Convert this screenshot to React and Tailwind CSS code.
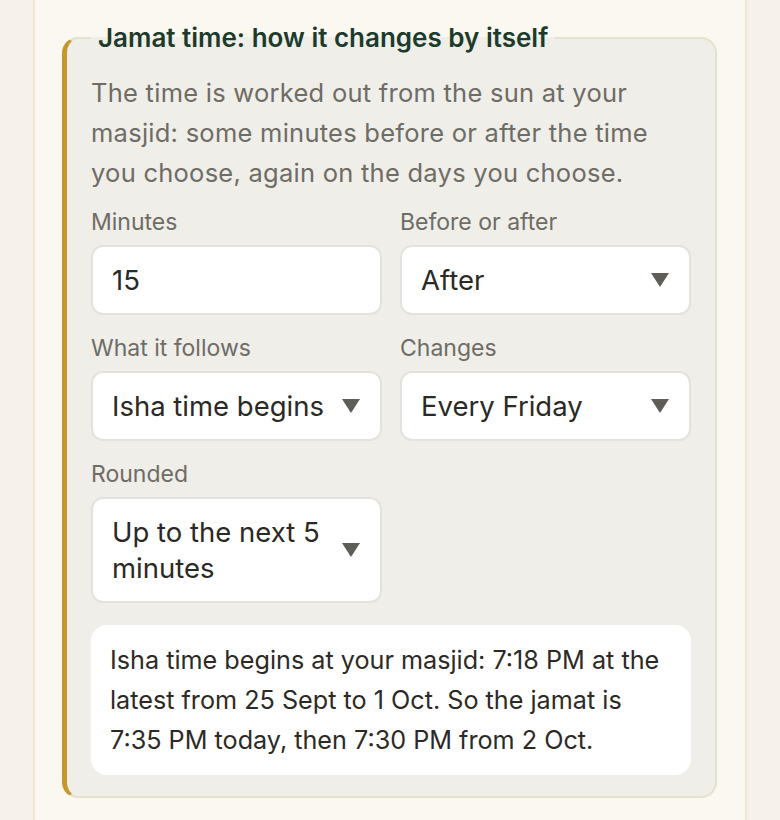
import { useState } from 'react';

const FONT = "font-['Inter','Liberation_Sans',sans-serif]";

function Caret() {
  return (
    <svg viewBox="0 0 18 14" className="h-[14px] w-[18px] shrink-0 fill-[#5e5d58]">
      <polygon points="0,0 18,0 9,14" />
    </svg>
  );
}

function Field({ label, children }) {
  return (
    <label className="flex flex-col">
      <span className="text-[23px] leading-[30px] text-[#6e6c65]">{label}</span>
      <div className="mt-[8px]">{children}</div>
    </label>
  );
}

function SelectBox({ value }) {
  return (
    <button
      type="button"
      className="flex min-h-[70px] w-full items-center justify-between gap-3 rounded-[12px] border-2 border-[#e4e2dc] bg-white py-[15px] pl-[19px] pr-[20px] text-left text-[27.5px] leading-[36px] text-[#2b2925]"
    >
      <span>{value}</span>
      <Caret />
    </button>
  );
}

export default function App() {
  const [minutes, setMinutes] = useState('15');

  return (
    <div className={`min-h-[820px] bg-[#f6f2eb] px-[33px] ${FONT}`}>
      <div className="min-h-[860px] border-x-2 border-[#efe7d4] bg-[#fbf8f1] pl-[27px] pr-[28px] pt-[23px] pb-10">
        <fieldset className="rounded-[16px] border-2 border-l-[5px] border-[#e5e2cb] border-l-[#c4982e] bg-[#efeee9] px-[24px] pb-[21px] pt-[20px]">
          <legend className="px-[7px] text-[26px] font-semibold leading-[30px] text-[#1d3b2b]">
            Jamat time: how it changes by itself
          </legend>

          <p className="text-[25.5px] leading-[40px] tracking-[0.01em] text-[#6e6c65]">
            The time is worked out from the sun at your masjid: some minutes before or after the time
            you choose, again on the days you choose.
          </p>

          <div className="mt-[14px] grid grid-cols-2 gap-x-[18px] gap-y-[18px]">
            <Field label="Minutes">
              <input
                value={minutes}
                onChange={(e) => setMinutes(e.target.value)}
                className="h-[70px] w-full rounded-[12px] border-2 border-[#e4e2dc] bg-white px-[19px] text-[27.5px] text-[#2b2925] outline-none"
              />
            </Field>
            <Field label="Before or after">
              <SelectBox value="After" />
            </Field>
            <Field label="What it follows">
              <SelectBox value="Isha time begins" />
            </Field>
            <Field label="Changes">
              <SelectBox value="Every Friday" />
            </Field>
            <Field label="Rounded">
              <SelectBox value="Up to the next 5 minutes" />
            </Field>
          </div>

          <div className="mt-[22px] rounded-[16px] bg-white px-[19px] py-[15px] text-[25.2px] leading-[40px] text-[#2d2a26]">
            Isha time begins at your masjid: 7:18 PM at the latest from 25 Sept to 1 Oct. So the jamat is
            7:35 PM today, then 7:30 PM from 2 Oct.
          </div>
        </fieldset>
      </div>
    </div>
  );
}
